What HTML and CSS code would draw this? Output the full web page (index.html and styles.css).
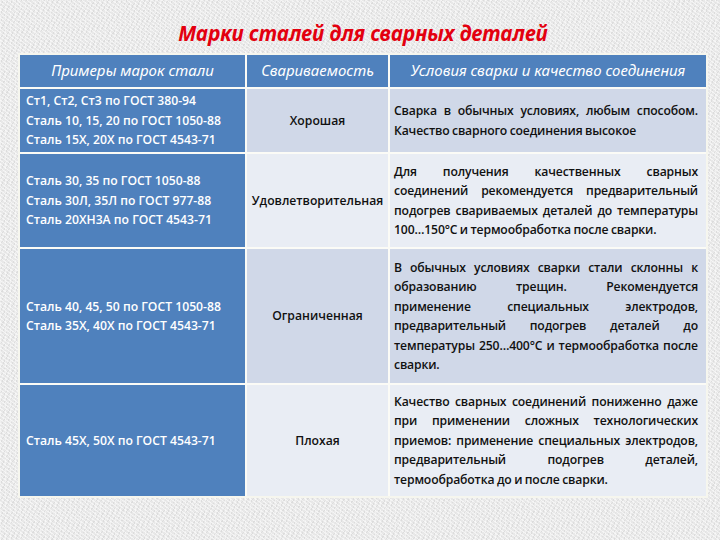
FILE: index.html
```html
<!DOCTYPE html>
<html lang="ru">
<head>
<meta charset="utf-8">
<title>Марки сталей для сварных деталей</title>
<link rel="stylesheet" href="styles.css">
</head>
<body>
<div class="page">
  <h1 class="title">Марки сталей для сварных деталей</h1>
  <div class="table">
    <div class="cell head">Примеры марок стали</div>
    <div class="cell head">Свариваемость</div>
    <div class="cell head">Условия сварки и качество соединения</div>

    <div class="cell grade"><span class="ln">Ст1, Ст2, Ст3 по ГОСТ 380-94</span><span class="ln">Сталь 10, 15, 20 по ГОСТ 1050-88</span><span class="ln">Сталь 15Х, 20Х по ГОСТ 4543-71</span></div>
    <div class="cell weld odd">Хорошая</div>
    <div class="cell cond odd"><span class="ln j">Сварка в обычных условиях, любым способом.</span><span class="ln">Качество сварного соединения высокое</span></div>

    <div class="cell grade"><span class="ln">Сталь 30, 35 по ГОСТ 1050-88</span><span class="ln">Сталь 30Л, 35Л по ГОСТ 977-88</span><span class="ln">Сталь 20ХН3А по ГОСТ 4543-71</span></div>
    <div class="cell weld even">Удовлетворительная</div>
    <div class="cell cond even"><span class="ln j">Для получения качественных сварных</span><span class="ln j">соединений рекомендуется предварительный</span><span class="ln j">подогрев свариваемых деталей до температуры</span><span class="ln">100…150°С и термообработка после сварки.</span></div>

    <div class="cell grade"><span class="ln">Сталь 40, 45, 50 по ГОСТ 1050-88</span><span class="ln">Сталь 35Х, 40Х по ГОСТ 4543-71</span></div>
    <div class="cell weld odd">Ограниченная</div>
    <div class="cell cond odd"><span class="ln j">В обычных условиях сварки стали склонны к</span><span class="ln j">образованию трещин. Рекомендуется</span><span class="ln j">применение специальных электродов,</span><span class="ln j">предварительный подогрев деталей до</span><span class="ln j">температуры 250…400°С и термообработка после</span><span class="ln">сварки.</span></div>

    <div class="cell grade"><span class="ln">Сталь 45Х, 50Х по ГОСТ 4543-71</span></div>
    <div class="cell weld even">Плохая</div>
    <div class="cell cond even"><span class="ln j">Качество сварных соединений пониженно даже</span><span class="ln j">при применении сложных технологических</span><span class="ln j">приемов: применение специальных электродов,</span><span class="ln j">предварительный подогрев деталей,</span><span class="ln">термообработка до и после сварки.</span></div>
  </div>
</div>
</body>
</html>
```

FILE: styles.css
```css
html, body {
  margin: 0;
  padding: 0;
}
body {
  width: 720px;
  height: 540px;
  overflow: hidden;
  background-color: #e8e8e8;
  background-image:
    repeating-linear-gradient(37deg, rgba(255,255,255,0.55) 0 1px, transparent 1px 3px),
    repeating-linear-gradient(-61deg, rgba(0,0,0,0.05) 0 1px, transparent 1px 4px),
    repeating-linear-gradient(90deg, rgba(255,255,255,0.35) 0 1px, transparent 1px 5px);
}
.page {
  padding: 22px 0 0 18px;
}
.title {
  margin: 0 0 9px 0;
  width: 690px;
  text-align: center;
  font-family: "Noto Sans", "Liberation Sans", sans-serif;
  font-style: italic;
  font-weight: 700;
  font-size: 20.5px;
  line-height: 22px;
  color: #e3000f;
}
.table {
  display: grid;
  grid-template-columns: 225px 141px 316px;
  grid-template-rows: 32px 63px 93px 134px 111px;
  gap: 2px;
  width: 686px;
  background: #fbfbf6;
  border: 2px solid #f6f6ee;
  font-family: "Open Sans", Lato, "Liberation Sans", sans-serif;
  font-weight: 600;
  font-size: 12.2px;
  line-height: 19.5px;
}
.cell {
  display: flex;
  flex-direction: column;
  justify-content: center;
  box-sizing: border-box;
}
.head {
  background: #4f81bd;
  color: #fff;
  align-items: center;
  text-align: center;
  font-family: "Noto Sans", "Liberation Sans", sans-serif;
  font-style: italic;
  font-weight: 400;
  font-size: 15px;
}
.grade {
  background: #4f81bd;
  color: #fff;
  padding-left: 6px;
}
.weld {
  align-items: center;
  text-align: center;
  color: #111;
}
.cond {
  padding: 0 8px 0 4px;
  color: #111;
  letter-spacing: -0.15px;
  word-spacing: -0.5px;
}
.odd { background: #d0d8e8; }
.even { background: #e9edf4; }
.ln { display: block; }
.ln.j {
  text-align: justify;
  text-align-last: justify;
}
```
